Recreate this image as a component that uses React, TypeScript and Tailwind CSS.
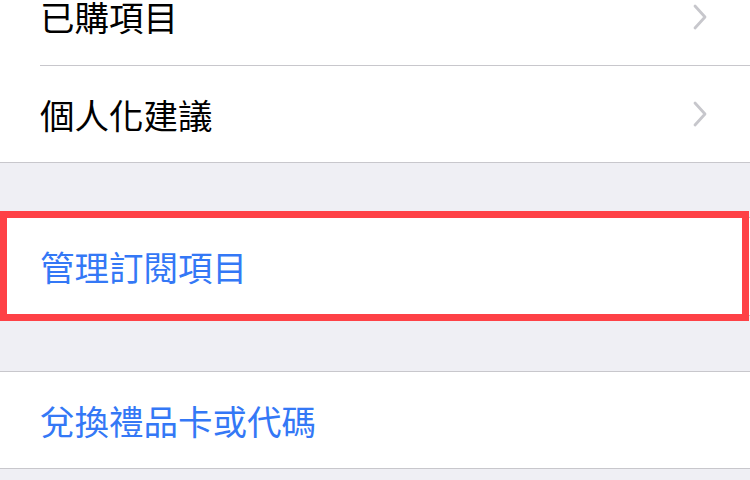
const font = { fontFamily: '"Noto Sans CJK TC", "Noto Sans", sans-serif' }

function Chevron() {
  return (
    <svg width="16" height="26" viewBox="0 0 16 26" fill="none" className="shrink-0">
      <polyline points="3,2 13,13 3,24" stroke="#c7c7cc" strokeWidth="2.8" strokeLinecap="round" strokeLinejoin="round" />
    </svg>
  )
}

function Row({ label, blue, chevron, height = "h-[96px]" }: { label: string; blue?: boolean; chevron?: boolean; height?: string }) {
  return (
    <div className={`flex items-center justify-between pl-[40px] pr-[42px] ${height}`}>
      <span className={`text-[34.5px] leading-none ${blue ? "text-[#3478f6]" : "text-black"}`}>{label}</span>
      {chevron && <Chevron />}
    </div>
  )
}

export default function App() {
  return (
    <div className="w-[750px] h-[480px] overflow-hidden bg-[#efeff4]" style={font}>
      <div className="-mt-[32px]">
        <div className="bg-white border-b border-[#c8c7cc]">
          <Row label="已購項目" chevron height="h-[97px]" />
          <div className="ml-[40px] h-px bg-[#c8c7cc]" />
          <Row label="個人化建議" chevron />
        </div>

        <div className="h-[54px]" />

        <div className="relative bg-white border-y border-[#c8c7cc]">
          <Row label="管理訂閱項目" blue height="h-[97px]" />
          <div className="absolute left-0 right-[1px] -top-[7px] -bottom-[6px] border-[7px] border-[#fe4146]" />
        </div>

        <div className="h-[55px]" />

        <div className="bg-white border-y border-[#c8c7cc]">
          <Row label="兌換禮品卡或代碼" blue />
        </div>
      </div>
    </div>
  )
}
